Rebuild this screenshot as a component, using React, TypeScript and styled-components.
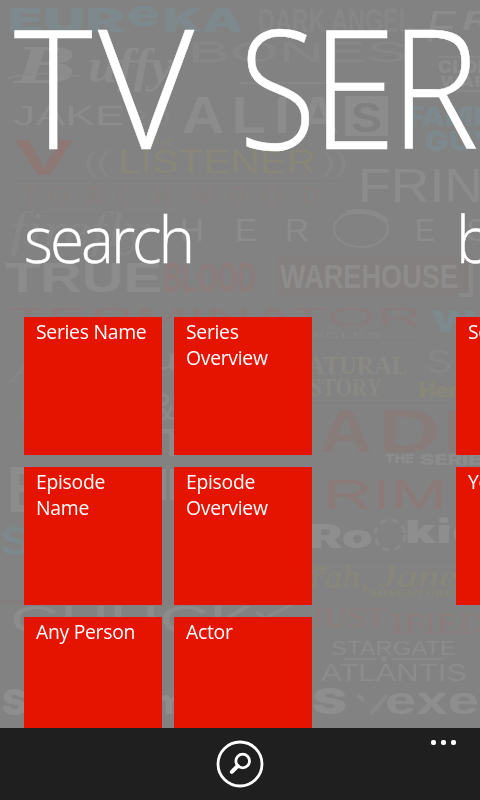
import React from "react";
import styled, { createGlobalStyle } from "styled-components";

const GlobalStyle = createGlobalStyle`
  * { box-sizing: border-box; }
  html, body { margin: 0; padding: 0; background: #828282; overflow: hidden; }
`;

const Phone = styled.main`
  position: relative;
  width: 480px;
  height: 800px;
  display: flex;
  flex-direction: column;
  overflow: hidden;
  background: #828282;
  color: #fff;
  font-family: "Open Sans", "Noto Sans", sans-serif;
`;

const Backdrop = styled.svg`
  position: absolute;
  left: 0;
  top: 0;
  width: 480px;
  height: 728px;
  opacity: 0.85;
  filter: blur(0.6px);
`;

const Panorama = styled.div`
  position: relative;
  flex: 1;
  min-height: 0;
  overflow: hidden;
`;

const Title = styled.h1`
  display: flex;
  margin: 0;
  height: 190px;
  padding-left: 14px;
  font-size: 166.5px;
  line-height: 170px;
  font-weight: 300;
  white-space: pre;
  -webkit-text-stroke: 0.6px #fff;
`;

const TitleGlyph = styled.span<{ $w: number; $sx: number }>`
  flex: none;
  display: inline-block;
  width: ${(p) => p.$w}px;
  transform: scaleX(${(p) => p.$sx});
  transform-origin: 0 0;
`;

const Sections = styled.div`
  display: flex;
  gap: 144px;
  padding-left: 24px;
`;

const Section = styled.section`
  flex: none;
  width: 288px;
`;

const SectionTitle = styled.h2`
  margin: 0;
  height: 127px;
  font-size: 64px;
  line-height: 97px;
  font-weight: 300;
  letter-spacing: -3.1px;
  white-space: nowrap;
  transform: scaleX(0.97);
  transform-origin: 0 0;
  -webkit-text-stroke: 0.4px #fff;
`;

const Tiles = styled.div`
  display: grid;
  grid-template-columns: 138px 138px;
  grid-auto-rows: 138px;
  gap: 12px;
`;

const Tile = styled.button`
  border: 0;
  margin: 0;
  padding: 2px 12px;
  display: flex;
  flex-direction: column;
  align-items: flex-start;
  background: #e51400;
  color: #fff;
  font: 400 20px/26px "Open Sans", "Noto Sans", sans-serif;
  text-align: left;
`;

const TileLine = styled.span`
  white-space: nowrap;
  letter-spacing: -0.3px;
  transform: scaleX(0.968);
  transform-origin: 0 0;
`;

const AppBar = styled.footer`
  position: relative;
  height: 72px;
  flex: none;
  display: grid;
  grid-template-columns: 1fr 48px 1fr;
  background: #1f1f1f;
`;

const SearchIcon = styled.svg`
  grid-column: 2;
  width: 48px;
  height: 48px;
  margin-top: 12px;
`;

const More = styled.div`
  display: flex;
  justify-self: end;
  gap: 5px;
  padding: 12px 24px 0 0;
`;

const Dot = styled.i`
  width: 5px;
  height: 5px;
  border-radius: 2px;
  background: #fff;
`;

type Logo = {
  t: string;
  x: number;
  y: number;
  w: number;
  s: number;
  c?: string;
  f?: string;
  b?: number;
  i?: boolean;
};

const gray = "#8e8e8e";
const faint = "#898989";
const red = "#8e7c7b";
const dimRed = "#887f7e";
const blue = "#7d8b8f";
const olive = "#8a8878";
const serif = "Liberation Serif";
const sans = "Liberation Sans";

const logos: Logo[] = [
  { t: "EUR", x: 7, y: 32, w: 118, s: 33, c: blue, b: 900, f: "Inter" },
  { t: "e", x: 127, y: 27, w: 33, s: 38, c: blue, b: 900, f: "Inter" },
  { t: "KA", x: 163, y: 32, w: 80, s: 33, c: blue, b: 900, f: "Inter" },
  { t: "DARK ANGEL", x: 258, y: 32, w: 155, s: 34, c: faint, b: 700 },
  { t: "F", x: 426, y: 42, w: 28, s: 44, c: gray, b: 400, i: true },
  { t: "R", x: 462, y: 30, w: 30, s: 28, c: gray, b: 700, i: true },
  { t: "B", x: 14, y: 83, w: 62, s: 54, c: gray, f: serif, i: true, b: 700 },
  { t: "uffy", x: 88, y: 82, w: 86, s: 48, c: gray, f: serif, i: true, b: 700 },
  { t: "BONES", x: 188, y: 62, w: 220, s: 29, c: faint },
  { t: "CLONE", x: 438, y: 73, w: 66, s: 17, c: gray, b: 900, f: "Inter" },
  { t: "WARS", x: 440, y: 87, w: 60, s: 15, c: gray, b: 900, f: "Inter" },
  { t: "JAKE", x: 13, y: 125, w: 112, s: 27, c: gray },
  { t: "2.0", x: 132, y: 125, w: 38, s: 20, c: faint },
  { t: "A", x: 182, y: 133, w: 42, s: 52, c: gray, b: 700 },
  { t: "L", x: 232, y: 133, w: 34, s: 52, c: gray, b: 700 },
  { t: "I", x: 274, y: 133, w: 16, s: 52, c: gray, b: 700 },
  { t: "A", x: 297, y: 133, w: 42, s: 52, c: gray, b: 700 },
  { t: "FAMILY", x: 407, y: 126, w: 110, s: 27, c: blue, b: 900, f: "Inter" },
  { t: "GUY", x: 424, y: 151, w: 74, s: 27, c: blue, b: 900, f: "Inter" },
  { t: "V", x: 15, y: 175, w: 58, s: 50, c: "#8f7775", b: 700 },
  { t: "((", x: 84, y: 171, w: 26, s: 27, c: faint },
  { t: "THE", x: 154, y: 145, w: 20, s: 9, c: olive },
  { t: "LISTENER", x: 118, y: 173, w: 198, s: 33, c: olive },
  { t: "))", x: 322, y: 171, w: 26, s: 27, c: faint },
  { t: "FRIN", x: 358, y: 202, w: 125, s: 49, c: gray, b: 400 },
  { t: "firefly", x: 10, y: 246, w: 140, s: 48, c: faint, f: serif, i: true },
  { t: "H", x: 180, y: 241, w: 24, s: 32, c: gray },
  { t: "E", x: 235, y: 241, w: 22, s: 32, c: gray },
  { t: "R", x: 285, y: 241, w: 24, s: 32, c: gray },
  { t: "E", x: 415, y: 241, w: 20, s: 32, c: gray },
  { t: "S", x: 466, y: 241, w: 22, s: 32, c: gray },
  { t: "TRUE", x: 5, y: 292, w: 157, s: 43, c: gray, b: 700 },
  { t: "BLOOD", x: 163, y: 292, w: 93, s: 43, c: red, b: 700 },
  { t: "WAREHOUSE", x: 280, y: 288, w: 178, s: 33, c: "#918e8e", b: 700 },
  { t: "TERMINATOR", x: 8, y: 326, w: 414, s: 26, c: "#8a7d7c", b: 400 },
  { t: "CHRONICLES", x: 240, y: 338, w: 141, s: 9, c: faint },
  { t: "W", x: 432, y: 332, w: 44, s: 28, c: blue, b: 900, f: "Inter" },
  { t: "NATURAL", x: 290, y: 374, w: 118, s: 25, c: "#8c8b85", b: 700, f: serif },
  { t: "STORY", x: 310, y: 396, w: 72, s: 25, c: "#8c8b85", b: 700, f: serif },
  { t: "S", x: 426, y: 373, w: 26, s: 34, c: faint },
  { t: "Heroes", x: 419, y: 398, w: 78, s: 22, c: olive, b: 900, f: "Inter" },
  { t: "A", x: 10, y: 382, w: 36, s: 36, c: faint, f: serif, i: true },
  { t: "L", x: 18, y: 420, w: 34, s: 29, c: blue, b: 700 },
  { t: "u", x: 151, y: 370, w: 28, s: 30, c: gray, b: 700 },
  { t: "&", x: 152, y: 420, w: 23, s: 37, c: gray },
  { t: "C", x: 19, y: 455, w: 38, s: 35, c: dimRed, b: 700 },
  { t: "T", x: 159, y: 456, w: 27, s: 39, c: gray, b: 700 },
  { t: "A", x: 319, y: 452, w: 53, s: 62, c: "#8a7b79", b: 700 },
  { t: "D", x: 378, y: 452, w: 62, s: 62, c: "#8a7b79", b: 700 },
  { t: "I", x: 442, y: 452, w: 26, s: 62, c: "#8a7b79", b: 700 },
  { t: "THE", x: 385, y: 463, w: 29, s: 12, c: gray, b: 900, f: "Inter" },
  { t: "SERIES", x: 420, y: 465, w: 76, s: 15, c: gray, b: 900, f: "Inter" },
  { t: "B", x: 7, y: 512, w: 42, s: 65, c: gray, b: 700 },
  { t: "ll", x: 160, y: 500, w: 16, s: 42, c: gray, b: 700 },
  { t: "RIM", x: 323, y: 509, w: 124, s: 43, c: "#8e7977", b: 400 },
  { t: "SL", x: 0, y: 555, w: 60, s: 40, c: blue, b: 700 },
  { t: "Ro", x: 309, y: 548, w: 64, s: 33, c: "#919191", b: 900, f: "Inter" },
  { t: "kie", x: 405, y: 543, w: 78, s: 32, c: "#919191", b: 900, f: "Inter" },
  { t: "THE", x: 309, y: 571, w: 20, s: 8, c: olive, b: 700 },
  { t: "rah,", x: 311, y: 588, w: 58, s: 34, c: olive, f: serif, i: true },
  { t: "Jane", x: 378, y: 587, w: 80, s: 32, c: olive, f: serif, i: true },
  { t: "ADVENTURES", x: 368, y: 597, w: 93, s: 10, c: olive, b: 700, f: serif },
  { t: "CHUCK", x: 10, y: 633, w: 245, s: 39, c: gray },
  { t: "JUST", x: 311, y: 627, w: 75, s: 30, c: red, f: serif },
  { t: "IFIED", x: 391, y: 633, w: 94, s: 30, c: red, f: serif },
  { t: "STARGATE", x: 331, y: 655, w: 125, s: 20, c: gray },
  { t: "ATLANTIS", x: 321, y: 681, w: 146, s: 23, c: gray },
  { t: "S", x: 2, y: 715, w: 25, s: 35, c: "#919191", b: 900, f: "Inter" },
  { t: "m", x: 153, y: 714, w: 32, s: 35, c: "#919191", b: 900, f: "Inter" },
  { t: "S", x: 312, y: 714, w: 35, s: 36, c: "#919191", b: 900, f: "Inter" },
  { t: "exe", x: 385, y: 714, w: 94, s: 38, c: "#919191", b: 700 },
];

const torchwood = [24, 50, 86, 117, 153, 190, 228, 263, 301];

const LogoWall = () => (
  <Backdrop viewBox="0 0 480 728" aria-hidden="true">
    <g fill="#858080">
      <rect x="276" y="257" width="200" height="38" />
      <rect x="0" y="600" width="300" height="5" />
    </g>
    <path d="M14 181H350M14 214H180M300 340H420M310 403H450M310 562H456" stroke="#7f7f7f" />
    {"TORCHWOOD".split("").map((ch, n) => (
      <text key={n} x={torchwood[n]} y="204" fontSize="25" fontFamily="Liberation Serif" fill={dimRed}>{ch}</text>
    ))}
    {logos.map((l, n) => (
      <text
        key={n}
        x={l.x}
        y={l.y}
        textLength={l.w}
        lengthAdjust="spacingAndGlyphs"
        fontSize={l.s}
        fontFamily={`"${l.f ?? sans}", sans-serif`}
        fontWeight={l.b ?? 400}
        fontStyle={l.i ? "italic" : "normal"}
        fill={l.c ?? gray}
      >
        {l.t}
      </text>
    ))}
    <rect x="345" y="96" width="43" height="40" fill="#8e8e8e" />
    <text x="351" y="132" fontSize="43" textLength="31" lengthAdjust="spacingAndGlyphs" fontFamily="Liberation Sans" fontWeight="700" fill="#808080">S</text>
    <g fill="none" stroke="#8c8c8c">
      <ellipse cx="361" cy="229" rx="27" ry="18" strokeWidth="2" />
      <path d="M346 213Q370 207 387 221" strokeWidth="5" />
      <path d="M8 78Q38 70 79 76M240 83H390M438 57H480M438 91H480M344 659H378M391 659H445" strokeWidth="1.5" />
      <circle cx="390" cy="535" r="15" strokeWidth="3" strokeDasharray="7 5" />
      <path d="M256 612L265 618L292 604" strokeWidth="3" />
      <path d="M358 695L364 701M371 714L387 695M471 264V295H459" strokeWidth="4" />
    </g>
    <circle cx="384" cy="659" r="3" fill="#8c8c8c" />
  </Backdrop>
);

const titleGlyphs = [
  { ch: "T", w: 84, sx: 0.9 },
  { ch: "V", w: 141, sx: 1 },
  { ch: "S", w: 71.5, sx: 0.85 },
  { ch: "E", w: 79, sx: 0.93 },
  { ch: "R", w: 90, sx: 0.9 },
];

const sections = [
  {
    title: "search",
    tiles: [["Series Name"], ["Series", "Overview"], ["Episode", "Name"], ["Episode", "Overview"], ["Any Person"], ["Actor"]],
  },
  { title: "browse", tiles: [["Series"], ["Genre"], ["Year"], ["Network"]] },
];

export default function App() {
  return (
    <>
      <GlobalStyle />
      <Phone>
        <LogoWall />
        <Panorama>
          <Title aria-label="TV SERIES">
            {titleGlyphs.map((g) => (
              <TitleGlyph key={g.ch} $w={g.w} $sx={g.sx}>{g.ch}</TitleGlyph>
            ))}
          </Title>
          <Sections>
            {sections.map((s) => (
              <Section key={s.title}>
                <SectionTitle>{s.title}</SectionTitle>
                <Tiles>
                  {s.tiles.map((lines) => (
                    <Tile key={lines.join(" ")}>
                      {lines.map((line) => <TileLine key={line}>{line}</TileLine>)}
                    </Tile>
                  ))}
                </Tiles>
              </Section>
            ))}
          </Sections>
        </Panorama>
        <AppBar>
          <SearchIcon viewBox="0 0 48 48" fill="none" stroke="#fff" aria-label="Search">
            <circle cx="24" cy="24" r="22" strokeWidth="2.8" />
            <circle cx="26.7" cy="21" r="6.8" strokeWidth="2.8" />
            <path d="M21.7 26L15.8 31.9" strokeWidth="4" strokeLinecap="round" />
          </SearchIcon>
          <More aria-label="More">
            <Dot /><Dot /><Dot />
          </More>
        </AppBar>
      </Phone>
    </>
  );
}
